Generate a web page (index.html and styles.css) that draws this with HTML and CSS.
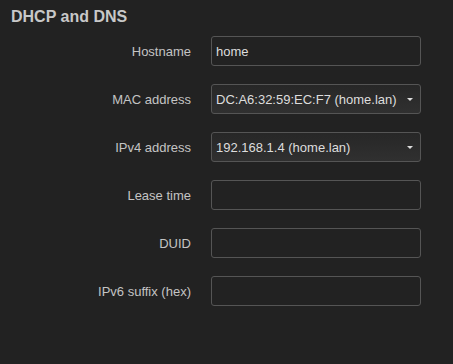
FILE: index.html
```html
<!DOCTYPE html>
<html lang="en">
<head>
    <meta charset="UTF-8">
    <meta name="viewport" content="width=device-width, initial-scale=1.0">
    <title>DHCP and DNS</title>
    <link rel="stylesheet" href="styles.css">
</head>
<body>
    <div class="section">
        <h3>DHCP and DNS</h3>

        <div class="form">
            <label for="hostname">Hostname</label>
            <input type="text" id="hostname" value="home">

            <label for="mac">MAC address</label>
            <div class="select-wrap">
                <select id="mac">
                    <option>DC:A6:32:59:EC:F7 (home.lan)</option>
                </select>
            </div>

            <label for="ipv4">IPv4 address</label>
            <div class="select-wrap">
                <select id="ipv4">
                    <option>192.168.1.4 (home.lan)</option>
                </select>
            </div>

            <label for="leasetime">Lease time</label>
            <input type="text" id="leasetime">

            <label for="duid">DUID</label>
            <input type="text" id="duid">

            <label for="hostid">IPv6 suffix (hex)</label>
            <input type="text" id="hostid">
        </div>
    </div>
</body>
</html>
```

FILE: styles.css
```css
:root {
    --bg-color: #222222;
    --text-color: #cccccc;
    --field-text: #dddddd;
    --border-color: #555555;
}

* {
    margin: 0;
    padding: 0;
    box-sizing: border-box;
}

body {
    font-family: Arial, "Liberation Sans", sans-serif;
    font-size: 13px;
    color: var(--text-color);
    background-color: var(--bg-color);
    height: 364px;
}

.section {
    padding: 7px 11px 0;
}

h3 {
    font-size: 16px;
    font-weight: bold;
    line-height: 20px;
    color: #c8c8c8;
    margin-bottom: 9px;
}

.form {
    display: grid;
    grid-template-columns: 180px 210px;
    column-gap: 20px;
    row-gap: 18px;
    align-items: center;
}

label {
    text-align: right;
    color: #c4c4c4;
}

input[type="text"],
select {
    width: 210px;
    height: 30px;
    padding: 0 4px;
    border: 1px solid var(--border-color);
    border-radius: 3px;
    background-color: var(--bg-color);
    color: var(--field-text);
    font-family: inherit;
    font-size: 13px;
    outline: none;
}

.select-wrap {
    position: relative;
    width: 210px;
    height: 30px;
}

select {
    appearance: none;
    -webkit-appearance: none;
    background-image: linear-gradient(#272727, #303030);
}

.select-wrap::after {
    content: "";
    position: absolute;
    right: 8px;
    top: 14px;
    border-left: 3px solid transparent;
    border-right: 3px solid transparent;
    border-top: 3px solid #dddddd;
    pointer-events: none;
}
```
